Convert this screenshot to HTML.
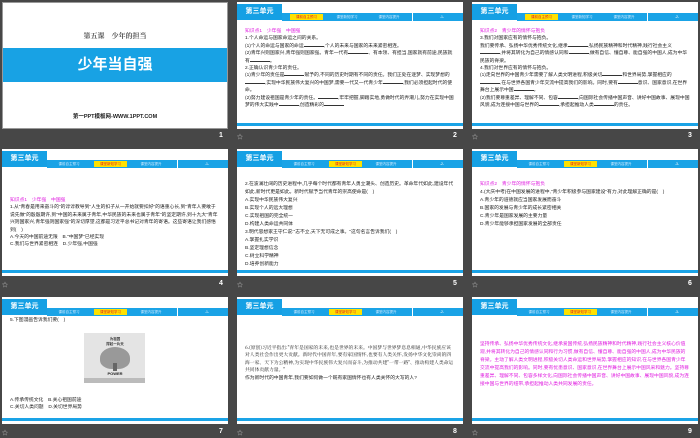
<!DOCTYPE html>
<html><head><meta charset="utf-8"><style>
*{margin:0;padding:0;box-sizing:border-box}
body{width:700px;height:438px;background:#474747;position:relative;overflow:hidden;font-family:"Liberation Sans","Noto Sans CJK SC",sans-serif}
.s{position:absolute;width:226px;height:127px;background:#fff;overflow:hidden}
.tab{position:absolute;left:0;top:2px;width:45px;height:16px;background:#15a0e4;color:#fff;font-size:7px;font-weight:bold;line-height:16px;text-align:center}
.bar{position:absolute;left:45px;top:11px;width:181px;height:8px;background:#1aa3e6}
.t{position:absolute;top:1px;height:6px;font-size:3.5px;line-height:6px;color:#cfeaff;text-align:center}
.y{background:#ffe100;color:#e02020}
.sep{position:absolute;left:130px;top:0;width:1px;height:8px;background:#fff}
.bl{position:absolute;left:0;top:121px;width:226px;height:3px;background:#1aa3e6}
.tx{position:absolute;left:8px;right:8px;font-size:4.8px;line-height:7.4px;color:#222}
.p{color:#e020e0}
.u{display:inline-block;width:20px;border-bottom:0.5px solid #333}
.n{position:absolute;color:#fff;font-size:7px;font-weight:bold}
.st{position:absolute;color:#ccc;font-size:6px}
</style></head><body>

<div class="s" style="left:2px;top:2px;border:1px solid #999">
<div style="position:absolute;top:28px;width:100%;text-align:center;font-family:'Noto Serif CJK SC',serif;font-size:7px;color:#555;font-weight:bold">第五课　少年的担当</div>
<div style="position:absolute;top:45px;width:100%;height:34px;background:#18a2e4;color:#fff;font-size:15px;font-weight:bold;line-height:34px;text-align:center">少年当自强</div>
<div style="position:absolute;top:109px;width:100%;text-align:center;font-size:5.5px;font-weight:bold;color:#222">第一PPT模板网-WWW.1PPT.COM</div>
</div>
<div class="n" style="left:219px;top:132px">1</div>

<div class="s" style="left:237px;top:2px">
<div class="tab">第三单元</div>
<div class="bar"><div class="t y" style="left:8px;width:33px">课前自主预习</div><div class="t" style="left:46px;width:38px">课堂新知学习</div><div class="t" style="left:88px;width:38px">课堂内容提升</div><div class="sep"></div><div class="t" style="left:145px;width:30px;color:#fff">-1-</div></div>
<div class="tx" style="top:26px"><span class="p">知识点1　少年强　中国强</span><br>1.个人命运与国家命运之间的关系。<br>(1)个人的命运与国家的命运<span class="u"></span>,个人的未来与国家的未来紧密相连。<br>(2)青年兴则国家兴,青年强则国家强。青年一代有<span class="u"></span>、有本领、有担当,国家就有前途,民族就有<span class="u"></span>。<br>2.正确认识青少年的责任。<br>(1)青少年的责任是<span class="u"></span>赋予的,不同的历史时期有不同的责任。我们正处在逐梦、实现梦想的<span class="u"></span>,实现中华民族伟大复兴的中国梦,需要一代又一代青少年<span class="u"></span>,我们必须担起时代的使命。<br>(2)努力建设祖国是青少年的责任。<span class="u"></span>,牢牢把握,脚踏实地,勇做时代的弄潮儿,努力在实现中国梦的伟大实践中<span class="u"></span>,创造精彩的<span class="u"></span></div>
<div class="bl"></div></div>
<div class="st" style="left:237px;top:132px">☆</div><div class="n" style="left:453px;top:132px">2</div>

<div class="s" style="left:472px;top:2px">
<div class="tab">第三单元</div>
<div class="bar"><div class="t y" style="left:8px;width:33px">课前自主预习</div><div class="t" style="left:46px;width:38px">课堂新知学习</div><div class="t" style="left:88px;width:38px">课堂内容提升</div><div class="sep"></div><div class="t" style="left:145px;width:30px;color:#fff">-2-</div></div>
<div class="tx" style="top:26px"><span class="p">知识点2　青少年的情怀与抱负</span><br>3.我们对国家应有的情怀与抱负。<br>我们要传承、弘扬中华优秀传统文化,继承<span class="u"></span>,弘扬民族精神和时代精神,践行社会主义<span class="u"></span>,并将其转化为自己的情感认同和<span class="u"></span>,做有自信、懂自尊、能自强的中国人,成为中华民族的脊梁。<br>4.我们对世界应有的情怀与抱负。<br>(1)走向世界的中国青少年需要了解人类文明进程,积极关切<span class="u"></span>和世界局势,掌握相应的<span class="u"></span>,在与世界各国青少年交流中提高我们的影响。同时,要有<span class="u"></span>意识、国家意识,在世界舞台上展示中国<span class="u"></span>。<br>(2)我们要尊重差异、理解不同、包容<span class="u"></span>,向国际社会传播中国声音、讲好中国故事、展现中国风貌,成为连接中国与世界的<span class="u"></span>,承担起推动人类<span class="u"></span>的责任。</div>
<div class="bl"></div></div>
<div class="st" style="left:472px;top:132px">☆</div><div class="n" style="left:688px;top:132px">3</div>

<div class="s" style="left:2px;top:149px">
<div class="tab">第三单元</div>
<div class="bar"><div class="t" style="left:0px;width:44px">课前自主预习</div><div class="t y" style="left:47px;width:33px">课堂新知学习</div><div class="t" style="left:84px;width:40px">课堂内容提升</div><div class="sep"></div><div class="t" style="left:145px;width:30px;color:#fff">-1-</div></div>
<div class="tx" style="top:48px"><span class="p">知识点1　少年强　中国强</span><br>1.从"青春是用来奋斗的"的谆谆教导到"人生的扣子从一开始就要扣好"的语重心长,到"青年人要敢于说先做"的殷殷期许,到"中国的未来属于青年,中华民族的未来也属于青年"的坚定期许,到十九大"青年兴则国家兴,青年强则国家强"的深切厚望,这都是习近平总书记对青年的寄语。这些寄语让我们感悟到(　)<br>A.今天的中国前途无限　B."中国梦"已经实现<br>C.我们与世界紧密相连　D.少年强,中国强</div>
<div class="bl"></div></div>
<div class="st" style="left:2px;top:280px">☆</div><div class="n" style="left:219px;top:280px">4</div>

<div class="s" style="left:237px;top:149px">
<div class="tab">第三单元</div>
<div class="bar"><div class="t" style="left:0px;width:44px">课前自主预习</div><div class="t y" style="left:47px;width:33px">课堂新知学习</div><div class="t" style="left:84px;width:40px">课堂内容提升</div><div class="sep"></div><div class="t" style="left:145px;width:30px;color:#fff">-2-</div></div>
<div class="tx" style="top:32px;line-height:8px">2.在波澜壮阔的历史进程中,几乎每个时代都有青年人勇立潮头、创造历史。革命年代如此,建设年代如此,新时代更是如此。新时代赋予当代青年的崇高使命是(　)<br>A.实现中华民族伟大复兴<br>B.实现个人的远大理想<br>C.实现祖国的完全统一<br>D.构建人类命运共同体<br>3.明代思想家王守仁说:"志不立,天下无可成之事。"这句名言告诉我们(　)<br>A.掌握扎实学识<br>B.坚定理想信念<br>C.树立科学精神<br>D.培养创新能力</div>
<div class="bl"></div></div>
<div class="st" style="left:237px;top:280px">☆</div><div class="n" style="left:453px;top:280px">5</div>

<div class="s" style="left:472px;top:149px">
<div class="tab">第三单元</div>
<div class="bar"><div class="t" style="left:0px;width:44px">课前自主预习</div><div class="t y" style="left:47px;width:33px">课堂新知学习</div><div class="t" style="left:84px;width:40px">课堂内容提升</div><div class="sep"></div><div class="t" style="left:145px;width:30px;color:#fff">-3-</div></div>
<div class="tx" style="top:32px;line-height:8px"><span class="p">知识点2　青少年的情怀与抱负</span><br>4.(大庆中考)在中国发展的进程中,"青少年积极参与国家建设"有力,对此理解正确的是(　)<br>A.青少年的道德就应当国家发展而奋斗<br>B.国家的发展与青少年的成长紧密相关<br>C.青少年是国家发展的主要力量<br>D.青少年能够承担国家发展的全部责任</div>
<div class="bl"></div></div>
<div class="st" style="left:472px;top:280px">☆</div><div class="n" style="left:688px;top:280px">6</div>

<div class="s" style="left:2px;top:297px">
<div class="tab">第三单元</div>
<div class="bar"><div class="t" style="left:0px;width:44px">课前自主预习</div><div class="t y" style="left:47px;width:33px">课堂新知学习</div><div class="t" style="left:84px;width:40px">课堂内容提升</div><div class="sep"></div><div class="t" style="left:145px;width:30px;color:#fff">-1-</div></div>
<div class="tx" style="top:20px">5.下图漫画告诉我们要(　)</div>
<div style="position:absolute;left:82px;top:36px;width:61px;height:50px;background:#e4e4e4">
<div style="position:absolute;left:20px;top:4px;font-size:3.5px;color:#333;text-align:center;width:22px;font-weight:bold">为祖国<br>撑起一片天</div>
<div style="position:absolute;left:16px;top:14px;width:30px;height:22px;border-radius:50% 50% 40% 40%;background:#999"></div>
<div style="position:absolute;left:29px;top:30px;width:4px;height:8px;background:#666"></div>
<div style="position:absolute;left:17px;top:38px;width:28px;font-size:4px;font-weight:bold;text-align:center;color:#222">POWER</div>
<div style="position:absolute;left:0;bottom:0;width:61px;height:5px;background:#bbb"></div></div>
<div class="tx" style="top:100px">A.传承传统文化　B.关心祖国前途<br>C.关切人类问题　D.关切世界局势</div>
<div class="bl"></div></div>
<div class="st" style="left:2px;top:428px">☆</div><div class="n" style="left:219px;top:428px">7</div>

<div class="s" style="left:237px;top:297px">
<div class="tab">第三单元</div>
<div class="bar"><div class="t" style="left:0px;width:44px">课前自主预习</div><div class="t y" style="left:47px;width:33px">课堂新知学习</div><div class="t" style="left:84px;width:40px">课堂内容提升</div><div class="sep"></div><div class="t" style="left:145px;width:30px;color:#fff">-2-</div></div>
<div class="tx" style="top:47px;font-family:'Noto Serif CJK SC',serif">6.(原创)习近平指出:"青年是国家的未来,也是世界的未来。中国梦与世界梦息息相通,中华民族应该对人类社会作出更大贡献。新时代中国青年,要有家国情怀,也要有人类关怀,发扬中华文化崇尚的四海一家、天下为公精神,为实现中华民族伟大复兴而奋斗,为推动共建"一带一路"、推动构建人类命运共同体贡献力量。"<br><span style="font-family:'Liberation Sans','Noto Sans CJK SC',sans-serif">作为新时代的中国青年,我们要如何做一个既有家国情怀也有人类关怀的大写的人?</span></div>
<div class="bl"></div></div>
<div class="st" style="left:237px;top:428px">☆</div><div class="n" style="left:453px;top:428px">8</div>

<div class="s" style="left:472px;top:297px">
<div class="tab">第三单元</div>
<div class="bar"><div class="t" style="left:0px;width:44px">课前自主预习</div><div class="t y" style="left:47px;width:33px">课堂新知学习</div><div class="t" style="left:84px;width:40px">课堂内容提升</div><div class="sep"></div><div class="t" style="left:145px;width:30px;color:#fff">-3-</div></div>
<div class="tx p" style="top:44px;color:#e020e0;line-height:8px">坚持传承、弘扬中华优秀传统文化,继承爱国传统,弘扬民族精神和时代精神,践行社会主义核心价值观,并将其转化为自己的情感认同和行为习惯,做有自信、懂自尊、能自强的中国人,成为中华民族的脊梁。主动了解人类文明进程,积极关切人类命运和世界局势,掌握相应的知识,在与世界各国青少年交流中提高我们的影响。同时,要有忧患意识、国家意识,在世界舞台上展示中国风采和魅力。坚持尊重差异、理解不同、包容多样文化,向国际社会传播中国声音、讲好中国故事、展现中国风貌,成为连接中国与世界的纽带,承担起推动人类共同发展的责任。</div>
<div class="bl"></div></div>
<div class="st" style="left:472px;top:428px">☆</div><div class="n" style="left:688px;top:428px">9</div>

</body></html>
